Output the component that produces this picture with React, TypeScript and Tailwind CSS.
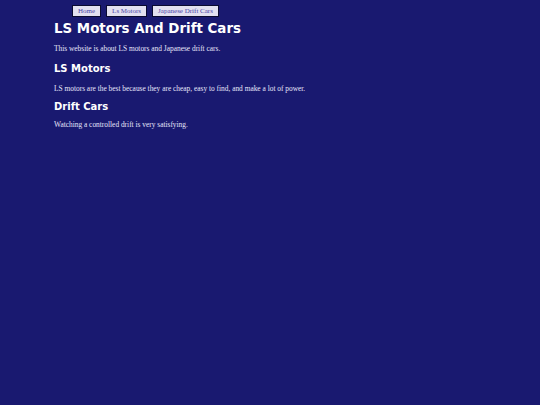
export default function App() {
  const links = ["Home", "Ls Motors", "Japanese Drift Cars"];
  return (
    <div className="min-h-[405px] w-full bg-[#191970] pl-[54px] pt-[5px]">
      {/* Nav */}
      <nav className="flex gap-[5px] pl-[18px]">
        {links.map((l) => (
          <button
            key={l}
            className="h-[12px] px-[5px] border border-[#0a0a30] bg-[#e2e0f0] text-[#4c46a8] text-[7px] leading-none font-['Liberation_Serif',serif]"
          >
            {l}
          </button>
        ))}
      </nav>

      <h1 className="mt-[3px] text-white font-bold text-[13.4px] leading-[18px] font-['DejaVu_Sans',sans-serif]">
        LS Motors And Drift Cars
      </h1>
      <p className="mt-[6px] text-[#e6e6fa] text-[7.4px] leading-[10px] font-['Liberation_Serif',serif]">
        This website is about LS motors and Japanese drift cars.
      </p>

      <h2 className="mt-[8px] text-white font-bold text-[10px] leading-[14px] font-['DejaVu_Sans',sans-serif]">
        LS Motors
      </h2>
      <p className="mt-[8px] text-[#e6e6fa] text-[7.4px] leading-[10px] font-['Liberation_Serif',serif]">
        LS motors are the best because they are cheap, easy to find, and make a lot of power.
      </p>

      <h2 className="mt-[6px] text-white font-bold text-[10px] leading-[14px] font-['DejaVu_Sans',sans-serif]">
        Drift Cars
      </h2>
      <p className="mt-[6px] text-[#e6e6fa] text-[7.4px] leading-[10px] font-['Liberation_Serif',serif]">
        Watching a controlled drift is very satisfying.
      </p>
    </div>
  );
}
